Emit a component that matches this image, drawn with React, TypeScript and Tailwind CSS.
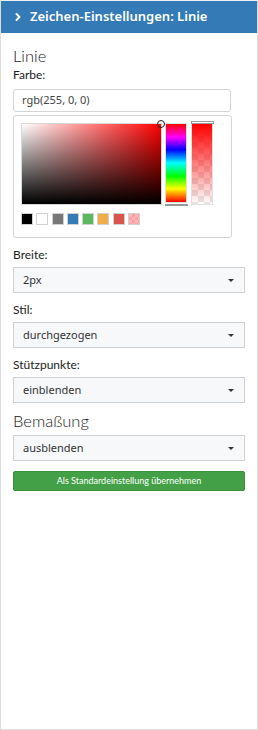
import { ChevronRight } from 'lucide-react';

const swatches = [
  'bg-black',
  'bg-white',
  'bg-[#777777]',
  'bg-[#337ab7]',
  'bg-[#5cb85c]',
  'bg-[#f0ad4e]',
  'bg-[#d9534f]',
];

function Select({ value }: { value: string }) {
  return (
    <div className="flex h-[26px] items-center justify-between border border-[#cdd1d6] bg-[#f7f8fa] pl-[9px] pr-[10px] text-[11px] text-[#333]">
      <span>{value}</span>
      <span className="h-0 w-0 border-x-[3px] border-t-[3px] border-x-transparent border-t-[#333]" />
    </div>
  );
}

function Label({ children }: { children: string }) {
  return (
    <div className="mt-[9px] mb-[4px] font-['Lato',sans-serif] text-[12px] leading-[16px] text-[#222]">
      {children}
    </div>
  );
}

export default function App() {
  return (
    <div className="flex h-[730px] w-[258px] flex-col border border-[#dcdcdc] border-t-[#f0f0f0] bg-white font-['Noto_Sans',sans-serif]">
      {/* Header */}
      <div className="flex h-[32px] items-center gap-[6px] bg-[#337ab7] pl-[11px] text-[13px] font-semibold text-white">
        <ChevronRight className="h-[12px] w-[12px]" strokeWidth={4} />
        <span>Zeichen-Einstellungen: Linie</span>
      </div>

      <div className="flex flex-col px-[12px] pt-[13px]">
        <div className="font-['Lato',sans-serif] text-[16.5px] leading-[20px] font-light text-[#222]">Linie</div>
        <div className="mt-[1px] mb-[6px] font-['Lato',sans-serif] text-[12px] leading-[16px] text-[#222]">Farbe:</div>
        <div className="flex h-[23px] w-[218px] items-center rounded-[3px] border border-[#d4d4d4] pl-[8px] text-[11px] text-[#444]">
          rgb(255, 0, 0)
        </div>

        {/* Color picker */}
        <div className="mt-[3px] w-[219px] rounded-[3px] border border-[#d4d4d4] px-[7px] pt-[7px] pb-[12px]">
          <div className="flex gap-[3px]">
            <div className="relative h-[82px] w-[141px] border border-[#d8d8d8] bg-[linear-gradient(to_top,#000,transparent),linear-gradient(to_right,#fff,#f00)]">
              <span className="absolute -top-[4px] -right-[4px] h-[8px] w-[8px] rounded-full border-[1.5px] border-[#222] bg-transparent" />
            </div>
            <div className="flex flex-col">
              <div className="h-[80px] w-[22px] border border-[#e0e0e0] bg-[linear-gradient(to_bottom,#f00,#f0f_17%,#00f_33%,#0ff_50%,#0f0_67%,#ff0_83%,#f00)]" />
              <div className="mt-[1px] h-[2px] w-[23px] bg-[#999]" />
            </div>
            <div className="relative h-[82px] w-[22px] border border-[#e0e0e0] bg-[repeating-conic-gradient(#e6e6e6_0_25%,#fff_0_50%)] bg-size-[12px_12px]">
              <div className="h-full w-full bg-[linear-gradient(to_bottom,#ff0000,rgba(255,0,0,0))]" />
              <span className="absolute -top-[3px] -left-[1px] h-[3px] w-[23px] border border-[#999] bg-white" />
            </div>
          </div>
          <div className="mt-[7px] flex gap-[3.3px]">
            {swatches.map((c) => (
              <span key={c} className={`h-[12px] w-[12px] border border-[#d0d0d0] ${c}`} />
            ))}
            <span className="h-[12px] w-[12px] border border-[#d0d0d0] bg-[repeating-conic-gradient(#ff9f9f_0_25%,#ffb8b8_0_50%)] bg-size-[6px_6px]" />
          </div>
        </div>

        <Label>Breite:</Label>
        <Select value="2px" />
        <Label>Stil:</Label>
        <Select value="durchgezogen" />
        <Label>Stützpunkte:</Label>
        <Select value="einblenden" />
        <div className="mt-[8px] mb-[4px] font-['Lato',sans-serif] text-[16.5px] leading-[20px] font-light text-[#222]">
          Bemaßung
        </div>
        <Select value="ausblenden" />
        <button className="mt-[10px] h-[20px] rounded-[2px] border border-[#3a8f3e] bg-[#43a047] font-['Lato',sans-serif] text-[9px] text-white">
          Als Standardeinstellung übernehmen
        </button>
      </div>
    </div>
  );
}
